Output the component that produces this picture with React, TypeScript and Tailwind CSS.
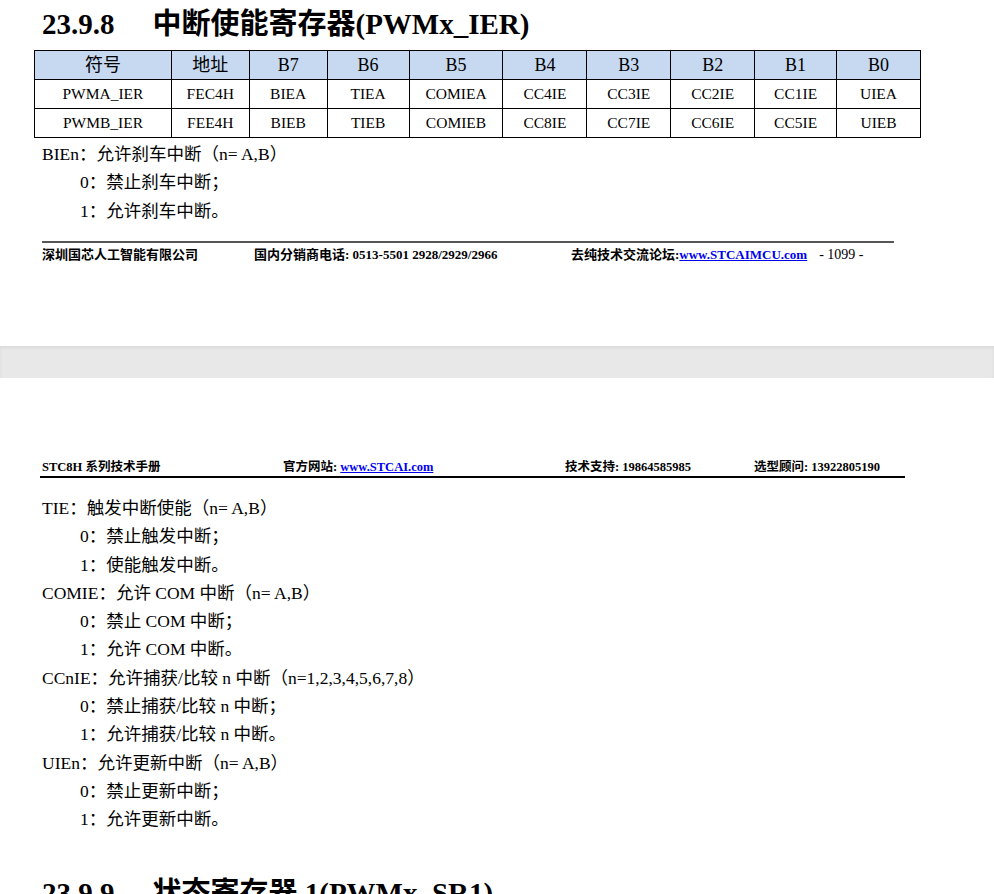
import React from 'react';

const serif = { fontFamily: '"Liberation Serif", "Noto Sans CJK SC", serif' };

const cols = ['w-[136px]', 'w-[78px]', 'w-[78px]', 'w-[82px]', 'w-[94px]', 'w-[84px]', 'w-[84px]', 'w-[84px]', 'w-[82px]', 'w-[84px]'];
const head = ['符号', '地址', 'B7', 'B6', 'B5', 'B4', 'B3', 'B2', 'B1', 'B0'];
const rows = [
  ['PWMA_IER', 'FEC4H', 'BIEA', 'TIEA', 'COMIEA', 'CC4IE', 'CC3IE', 'CC2IE', 'CC1IE', 'UIEA'],
  ['PWMB_IER', 'FEE4H', 'BIEB', 'TIEB', 'COMIEB', 'CC8IE', 'CC7IE', 'CC6IE', 'CC5IE', 'UIEB'],
];

const Line = ({ t, indent }: { t: string; indent?: boolean }) => (
  <div className={`h-[28.3px] leading-[28px] text-[17.5px] ${indent ? 'pl-[38px]' : ''}`}>{t}</div>
);

export default function App() {
  return (
    <div className="w-[994px] h-[894px] overflow-hidden bg-white text-black" style={serif}>
      <div className="h-[346px] pl-[42px]">
        <div className="h-[50px] flex items-center text-[29px] font-bold">
          <span>23.9.8</span>
          <span className="ml-[38px]">中断使能寄存器(PWMx_IER)</span>
        </div>
        <div className="ml-[-8px] w-[887px] border border-black">
          <div className="flex h-[28px] bg-[#c6d9f1] text-[18px]">
            {head.map((h, i) => (
              <div key={i} className={`${cols[i]} flex items-center justify-center ${i ? 'border-l border-black' : ''}`}>{h}</div>
            ))}
          </div>
          {rows.map((r, j) => (
            <div key={j} className="flex h-[29px] border-t border-black text-[15.5px]">
              {r.map((c, i) => (
                <div key={i} className={`${cols[i]} flex items-center justify-center ${i ? 'border-l border-black' : ''}`}>{c}</div>
              ))}
            </div>
          ))}
        </div>
        <div className="mt-[2px]">
          <Line t="BIEn：允许刹车中断（n= A,B）" />
          <Line t="0：禁止刹车中断；" indent />
          <Line t="1：允许刹车中断。" indent />
        </div>
        <div className="mt-[16px] w-[852px] h-[2px] bg-[#555]" />
        <div className="flex items-center h-[24px] text-[13px] font-bold whitespace-nowrap">
          <span className="w-[212px]">深圳国芯人工智能有限公司</span>
          <span className="w-[317px]">国内分销商电话: 0513-5501 2928/2929/2966</span>
          <span>去纯技术交流论坛:<span className="text-[#0000ee] underline">www.STCAIMCU.com</span></span>
          <span className="ml-[12px] font-normal text-[14px]">- 1099 -</span>
        </div>
      </div>
      <div className="h-[32px] bg-[#e8e8e8] shadow-[inset_0_2px_3px_rgba(0,0,0,0.06)]" />
      <div className="pl-[42px] pt-[80px]">
        <div className="flex items-center h-[18px] text-[12.5px] font-bold whitespace-nowrap">
          <span className="w-[241px]">STC8H 系列技术手册</span>
          <span className="w-[282px]">官方网站: <span className="text-[#0000ee] underline">www.STCAI.com</span></span>
          <span className="w-[189px]">技术支持: 19864585985</span>
          <span>选型顾问: 13922805190</span>
        </div>
        <div className="ml-[-2px] w-[865px] h-[2px] bg-black" />
        <div className="mt-[16px]">
          <Line t="TIE：触发中断使能（n= A,B）" />
          <Line t="0：禁止触发中断；" indent />
          <Line t="1：使能触发中断。" indent />
          <Line t="COMIE：允许 COM 中断（n= A,B）" />
          <Line t="0：禁止 COM 中断；" indent />
          <Line t="1：允许 COM 中断。" indent />
          <Line t="CCnIE：允许捕获/比较 n 中断（n=1,2,3,4,5,6,7,8）" />
          <Line t="0：禁止捕获/比较 n 中断；" indent />
          <Line t="1：允许捕获/比较 n 中断。" indent />
          <Line t="UIEn：允许更新中断（n= A,B）" />
          <Line t="0：禁止更新中断；" indent />
          <Line t="1：允许更新中断。" indent />
        </div>
        <div className="mt-[40px] flex items-center h-[40px] text-[29px] font-bold">
          <span>23.9.9</span>
          <span className="ml-[38px]">状态寄存器 1(PWMx_SR1)</span>
        </div>
      </div>
    </div>
  );
}
